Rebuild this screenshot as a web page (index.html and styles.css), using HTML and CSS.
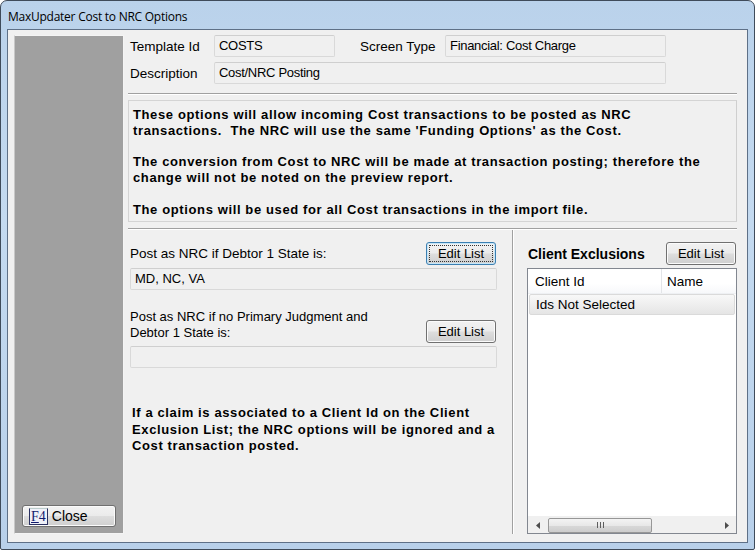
FILE: index.html
```html
<!DOCTYPE html>
<html>
<head>
<meta charset="utf-8">
<link rel="stylesheet" href="styles.css">
</head>
<body>
<div class="window">
  <div class="titlebar"><span class="title">MaxUpdater Cost to NRC Options</span></div>
  <div class="client">
    <div class="sidepanel">
      <button class="btn close-btn"><span class="fkey"><u>F</u>4</span><span class="close-label">Close</span></button>
    </div>
    <div class="content">
      <div class="field-row">
        <span class="label lbl-w">Template Id</span>
        <div class="input w-id">COSTS</div>
        <span class="label lbl-type">Screen Type</span>
        <div class="input w-type">Financial: Cost Charge</div>
      </div>
      <div class="field-row row2">
        <span class="label lbl-w">Description</span>
        <div class="input w-desc">Cost/NRC Posting</div>
      </div>
      <div class="sep"></div>
      <div class="infobox">
        <p>These options will allow incoming Cost transactions to be posted as NRC<br>transactions.&nbsp; The NRC will use the same 'Funding Options' as the Cost.</p>
        <p class="p2">The conversion from Cost to NRC will be made at transaction posting; therefore the<br>change will not be noted on the preview report.</p>
        <p>The options will be used for all Cost transactions in the import file.</p>
      </div>
      <div class="sep sep2"></div>
      <div class="lower">
        <div class="leftcol">
          <div class="opt-row">
            <span class="label">Post as NRC if Debtor 1 State is:</span>
            <button class="btn edit-btn focused"><span class="focus-ring">Edit List</span></button>
          </div>
          <div class="input w-state">MD, NC, VA</div>
          <div class="opt-row opt-row2">
            <span class="label two-line">Post as NRC if no Primary Judgment and<br>Debtor 1 State is:</span>
            <button class="btn edit-btn">Edit List</button>
          </div>
          <div class="input w-state state2"></div>
          <p class="note">If a claim is associated to a Client Id on the Client<br>Exclusion List; the NRC options will be ignored and a<br>Cost transaction posted.</p>
        </div>
        <div class="vsep"></div>
        <div class="rightcol">
          <div class="excl-head">
            <span class="excl-title">Client Exclusions</span>
            <button class="btn edit-btn">Edit List</button>
          </div>
          <div class="listbox">
            <div class="list-header">
              <span class="col-id">Client Id</span>
              <span class="col-name">Name</span>
            </div>
            <div class="list-row">Ids Not Selected</div>
            <div class="list-body"></div>
            <div class="hscroll">
              <span class="arrow">
                <svg width="5" height="7" viewBox="0 0 5 7"><path d="M4 0 L0 3.5 L4 7 Z" fill="#4d4d4d"/></svg>
              </span>
              <div class="track">
                <div class="thumb"><span class="grip"></span></div>
              </div>
              <span class="arrow">
                <svg width="5" height="7" viewBox="0 0 5 7"><path d="M1 0 L5 3.5 L1 7 Z" fill="#4d4d4d"/></svg>
              </span>
            </div>
          </div>
        </div>
      </div>
    </div>
  </div>
</div>
</body>
</html>
```
FILE: styles.css
```css
* { box-sizing: border-box; }
html, body { margin: 0; padding: 0; }
body {
  width: 755px;
  height: 550px;
  overflow: hidden;
  background: #fff;
  font-family: "Liberation Sans", Arial, sans-serif;
  font-size: 13px;
  color: #000;
}
.window {
  width: 755px;
  height: 550px;
  border: 1px solid #3f4b5a;
  border-radius: 7px 7px 2px 2px;
  padding: 0 6px 6px 6px;
  background: linear-gradient(180deg, #bad2eb 0%, #c4daf0 40%, #b8d0ea 100%);
  display: flex;
  flex-direction: column;
}
.titlebar {
  height: 28px;
  display: flex;
  align-items: center;
  padding-left: 1px;
  padding-top: 2px;
}
.title {
  font-family: "Open Sans", "Noto Sans", sans-serif;
  font-size: 12px;
  letter-spacing: -0.25px;
  color: #000;
}
.client {
  flex: 1;
  border: 1px solid #5e7087;
  background: #f0f0f0;
  display: flex;
  padding: 5px 10px 8px 6px;
}
.sidepanel {
  width: 110px;
  background: #a0a0a0;
  border: 1px solid #f4f4f4;
  border-left-color: #c8c8c8;
  display: flex;
  flex-direction: column;
  justify-content: flex-end;
  padding: 0 6px 6px 7px;
}
.btn {
  font-family: "Liberation Sans", Arial, sans-serif;
  font-size: 13px;
  color: #000;
  border: 1px solid #707070;
  border-radius: 3px;
  background: linear-gradient(180deg, #f2f2f2 0%, #ebebeb 48%, #dddddd 52%, #cfcfcf 100%);
  box-shadow: inset 0 0 0 1px #fbfbfb;
  padding: 0;
  margin: 0;
  cursor: default;
}
.close-btn {
  width: 94px;
  height: 22px;
  display: flex;
  align-items: center;
  padding-left: 6px;
  gap: 4px;
}
.fkey {
  font-family: "Liberation Serif", "Times New Roman", serif;
  font-size: 14px;
  color: #121a6e;
  border: 1px solid #2a3060;
  border-top-color: #bcc;
  line-height: 15px;
  padding: 0 1px;
  background: #eef0f8;
}
.fkey u { text-decoration: underline; }
.close-label { font-size: 14px; }
.content {
  flex: 1;
  margin-left: 4px;
  display: flex;
  flex-direction: column;
}
.field-row {
  display: flex;
  align-items: center;
  height: 22px;
}
.row2 { margin-top: 5px; }
.label { font-size: 13.5px; white-space: nowrap; padding-left: 2px; }
.lbl-w { width: 86px; }
.lbl-type { margin-left: 25px; width: 85px; padding-left: 0; }
.input {
  height: 22px;
  background: #f0f0f0;
  border: 1px solid #d9d9d9;
  border-top-color: #cfcfcf;
  border-radius: 2px;
  padding: 2px 4px;
  font-size: 13px;
  letter-spacing: -0.3px;
  white-space: nowrap;
}
.w-id { width: 121px; }
.w-type { width: 221px; }
.w-desc { width: 452px; }
.sep {
  margin-top: 9px;
  height: 2px;
  border-top: 1px solid #a0a0a0;
  border-bottom: 1px solid #ffffff;
}
.infobox {
  margin-top: 5px;
  height: 122px;
  border: 1px solid #d4d4d4;
  border-right-color: #cfcfcf;
  padding: 6px 4px 5px 4px;
  font-weight: bold;
  font-size: 13px;
  letter-spacing: 0.62px;
  line-height: 16px;
  white-space: nowrap;
}
.infobox p { margin: 0 0 15px 0; }
.infobox .p2 { margin-bottom: 16px; }
.sep2 { margin-top: 6px; }
.lower {
  flex: 1;
  display: flex;
}
.leftcol {
  width: 384px;
  display: flex;
  flex-direction: column;
  padding-right: 16px;
}
.opt-row {
  display: flex;
  justify-content: space-between;
  align-items: center;
  margin-top: 12px;
  height: 23px;
}
.edit-btn {
  width: 70px;
  height: 23px;
  text-align: center;
}
.focused {
  border-color: #3c7fb1;
  box-shadow: inset 0 0 0 1px #c6e6f8;
  padding: 2px;
}
.focus-ring {
  display: flex;
  align-items: center;
  justify-content: center;
  height: 100%;
  border: 1px dotted #333;
}
.w-state { width: 367px; margin-left: 2px; margin-top: 3px; letter-spacing: 0; }
.opt-row2 {
  margin-top: 19px;
  height: 34px;
  align-items: flex-end;
}
.two-line { line-height: 16px; align-self: flex-start; font-size: 13px; }
.state2 { margin-top: 3px; }
.note {
  margin: 37px 0 0 0;
  padding-left: 4px;
  font-weight: bold;
  font-size: 13px;
  letter-spacing: 0.62px;
  line-height: 16.5px;
  white-space: nowrap;
}
.vsep {
  width: 2px;
  border-left: 1px solid #a0a0a0;
  border-right: 1px solid #ffffff;
}
.rightcol {
  flex: 1;
  display: flex;
  flex-direction: column;
  padding-left: 13px;
}
.excl-head {
  display: flex;
  justify-content: space-between;
  align-items: center;
  margin-top: 12px;
  height: 23px;
}
.excl-title {
  font-weight: bold;
  font-size: 14px;
  padding-left: 1px;
}
.excl-head .edit-btn { margin-right: 1px; }
.listbox {
  margin-top: 3px;
  flex: 1;
  border: 1px solid #828790;
  background: #fff;
  display: flex;
  flex-direction: column;
}
.list-header {
  height: 25px;
  display: flex;
  align-items: center;
  font-size: 13.5px;
  background: linear-gradient(180deg, #ffffff 0%, #ffffff 60%, #f7f8fa 100%);
  border-bottom: 1px solid #eef0f3;
}
.col-id {
  width: 134px;
  padding-left: 7px;
  height: 100%;
  display: flex;
  align-items: center;
  border-right: 1px solid #e3e5e8;
}
.col-name { padding-left: 5px; }
.list-row {
  margin: 0 1px;
  height: 21px;
  display: flex;
  align-items: center;
  padding-left: 6px;
  font-size: 13.5px;
  border: 1px solid #dadada;
  border-radius: 2px;
  background: linear-gradient(180deg, #f8f8f8 0%, #e5e5e5 100%);
}
.list-body { flex: 1; }
.hscroll {
  height: 17px;
  display: flex;
  align-items: center;
  background: #f0f0f0;
  border-top: 1px solid #f0f0f0;
}
.arrow {
  width: 20px;
  height: 17px;
  display: flex;
  align-items: center;
  justify-content: center;
}
.track { flex: 1; height: 17px; display: flex; align-items: center; }
.thumb {
  width: 104px;
  height: 15px;
  border: 1px solid #979797;
  border-radius: 2px;
  background: linear-gradient(180deg, #f3f3f3 0%, #e8e8e8 50%, #d8d8d8 52%, #cdcdcd 100%);
  display: flex;
  align-items: center;
  justify-content: center;
}
.grip {
  width: 7px;
  height: 6px;
  background: repeating-linear-gradient(90deg, #5e5e5e 0 1px, transparent 1px 3px);
}
```
